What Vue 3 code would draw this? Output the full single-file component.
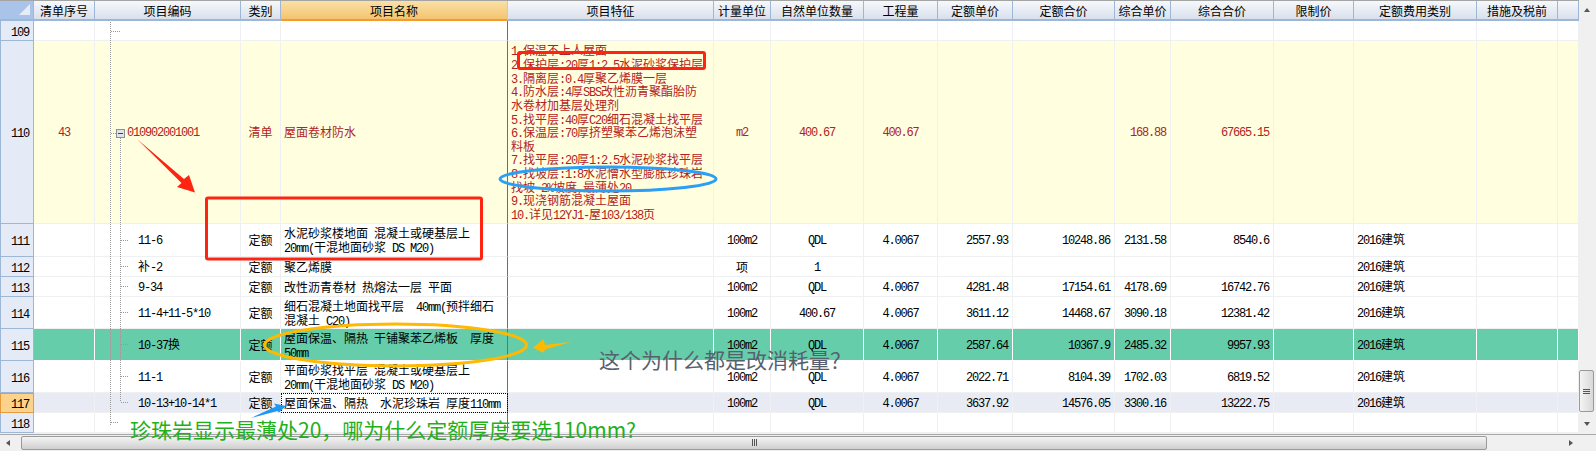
<template>
  <div class="sheet">
    <div class="main">
      <div class="table">
        <div class="row head">
          <div class="corner"></div>
          <div
            v-for="(h, i) in headers"
            :key="h + i"
            class="hcell"
            :class="{ picked: h === '项目名称' }"
          >{{ h }}</div>
        </div>

        <div
          v-for="r in rows"
          :key="r.no"
          class="row"
          :class="r.kind"
          :style="{ height: r.h + 'px' }"
        >
          <div class="no"><Txt :text="String(r.no)" /></div>
          <div class="cell center"><Txt :text="r.seq" /></div>
          <div class="cell code" :class="{ top: r.top }"><Txt :text="r.code" /></div>
          <div class="cell center"><Txt :text="r.type" /></div>
          <div class="cell name">
            <div v-for="l in r.name" :key="l" class="line"><Txt :text="l" /></div>
          </div>
          <div class="cell feat">
            <div v-for="l in r.feat" :key="l" class="line"><Txt :text="l" /></div>
          </div>
          <div class="cell center"><Txt :text="r.unit" /></div>
          <div class="cell center"><Txt :text="r.qty" /></div>
          <div class="cell center"><Txt :text="r.work" /></div>
          <div class="cell right"><Txt :text="r.price" /></div>
          <div class="cell right"><Txt :text="r.sum" /></div>
          <div class="cell right"><Txt :text="r.uprice" /></div>
          <div class="cell right"><Txt :text="r.usum" /></div>
          <div class="cell"></div>
          <div class="cell fee"><Txt :text="r.fee" /></div>
          <div class="cell"></div>
          <div class="cell last"></div>
        </div>
      </div>

      <div class="vbar">
        <span class="arrow up"></span>
        <div class="vthumb"><i></i><i></i><i></i></div>
        <span class="arrow down"></span>
      </div>
    </div>

    <div class="hbar">
      <span class="arrow left"></span>
      <div class="hthumb"><i></i><i></i><i></i></div>
      <span class="arrow right-a"></span>
    </div>

    <!-- tree lines and the hand drawn marks on top of the sheet -->
    <svg class="marks" width="1596" height="451" viewBox="0 0 1596 451">
      <g stroke="#999" stroke-dasharray="1 1" fill="none" shape-rendering="crispEdges">
        <path d="M110.5 22V425" />
        <path d="M120.5 138V402" />
        <path d="M111 31.5H120" />
        <path d="M111 133.5H116" />
        <path d="M121 240.5H129" />
        <path d="M121 266.5H129" />
        <path d="M121 286.5H129" />
        <path d="M121 312.5H129" />
        <path d="M121 344.5H129" />
        <path d="M121 376.5H129" />
        <path d="M121 402.5H129" />
        <path d="M111 422.5H119" />
      </g>
      <rect x="116.5" y="129.5" width="8" height="8" fill="#dfe3ec" stroke="#8a8f9c" />
      <path d="M118 133.5h5" stroke="#2b3f86" shape-rendering="crispEdges" />

      <g fill="none" stroke-width="3">
        <rect x="206.5" y="198" width="275" height="61" rx="1.5" stroke="#ff2412" />
        <rect x="518.5" y="52.5" width="186" height="16" rx="1.5" stroke="#ff2412" />
        <ellipse cx="608" cy="179" rx="108" ry="12" stroke="#2a9ff4" />
        <ellipse cx="395.5" cy="345" rx="131" ry="21" stroke="#ffb900" />
      </g>
      <polygon fill="#ff2412" points="137,139 184,179 189,175 195,192.5 177,187 181.5,183" />
      <polygon fill="#ffb900" points="571.4,341.7 545,345 543.6,339 532.9,347.7 543.6,352.7 545,349.5" />
      <polygon fill="#1e96f2" points="251,418 276,406.5 274,403.5 286,406 279,412.5 277.5,411" />
    </svg>

    <div class="note note-grey">这个为什么都是改消耗量？</div>
    <div class="note note-green">珍珠岩显示最薄处20，哪为什么定额厚度要选110mm?</div>
  </div>
</template>

<script setup>
import { h } from 'vue'

// SimSun has half width latin, so latin runs get their own mono span
function Txt(props) {
  const parts = (props.text || '').match(/[\x20-\x7e]+|[^\x20-\x7e]+/g) || []
  return h(
    'span',
    parts.map((p) => h('span', { class: /^[\x20-\x7e]/.test(p) ? 'lat' : 'cjk' }, p))
  )
}
Txt.props = ['text']

const headers = [
  '清单序号', '项目编码', '类别', '项目名称', '项目特征', '计量单位', '自然单位数量', '工程量',
  '定额单价', '定额合价', '综合单价', '综合合价', '限制价', '定额费用类别', '措施及税前', ''
]

const rows = [
  { no: 109, h: 20 },
  {
    no: 110, h: 183, kind: 'bill', top: true, seq: '43', code: '010902001001', type: '清单',
    name: ['屋面卷材防水'],
    feat: [
      '1.保温不上人屋面',
      '2.保护层:20厚1:2.5水泥砂浆保护层',
      '3.隔离层:0.4厚聚乙烯膜一层',
      '4.防水层:4厚SBS改性沥青聚酯胎防',
      '水卷材加基层处理剂',
      '5.找平层:40厚C20细石混凝土找平层',
      '6.保温层:70厚挤塑聚苯乙烯泡沫塑',
      '料板',
      '7.找平层:20厚1:2.5水泥砂浆找平层',
      '8.找坡层:1:8水泥憎水型膨胀珍珠岩',
      '找坡 2%坡度,最薄处20',
      '9.现浇钢筋混凝土屋面',
      '10.详见12YJ1-屋103/138页'
    ],
    unit: 'm2', qty: '400.67', work: '400.67', uprice: '168.88', usum: '67665.15'
  },
  {
    no: 111, h: 33, code: '11-6', type: '定额',
    name: ['水泥砂浆楼地面 混凝土或硬基层上', '20mm(干混地面砂浆 DS M20)'],
    unit: '100m2', qty: 'QDL', work: '4.0067', price: '2557.93', sum: '10248.86',
    uprice: '2131.58', usum: '8540.6', fee: '2016建筑'
  },
  {
    no: 112, h: 20, code: '补-2', type: '定额', name: ['聚乙烯膜'], unit: '项', qty: '1', fee: '2016建筑'
  },
  {
    no: 113, h: 20, code: '9-34', type: '定额', name: ['改性沥青卷材 热熔法一层 平面'],
    unit: '100m2', qty: 'QDL', work: '4.0067', price: '4281.48', sum: '17154.61',
    uprice: '4178.69', usum: '16742.76', fee: '2016建筑'
  },
  {
    no: 114, h: 32, code: '11-4+11-5*10', type: '定额',
    name: ['细石混凝土地面找平层  40mm(预拌细石', '混凝土 C20)'],
    unit: '100m2', qty: '400.67', work: '4.0067', price: '3611.12', sum: '14468.67',
    uprice: '3090.18', usum: '12381.42', fee: '2016建筑'
  },
  {
    no: 115, h: 32, kind: 'teal', code: '10-37换', type: '定额',
    name: ['屋面保温、隔热 干铺聚苯乙烯板  厚度', '50mm'],
    unit: '100m2', qty: 'QDL', work: '4.0067', price: '2587.64', sum: '10367.9',
    uprice: '2485.32', usum: '9957.93', fee: '2016建筑'
  },
  {
    no: 116, h: 32, code: '11-1', type: '定额',
    name: ['平面砂浆找平层 混凝土或硬基层上', '20mm(干混地面砂浆 DS M20)'],
    unit: '100m2', qty: 'QDL', work: '4.0067', price: '2022.71', sum: '8104.39',
    uprice: '1702.03', usum: '6819.52', fee: '2016建筑'
  },
  {
    no: 117, h: 20, kind: 'current', code: '10-13+10-14*1', type: '定额',
    name: ['屋面保温、隔热  水泥珍珠岩 厚度110mm'],
    unit: '100m2', qty: 'QDL', work: '4.0067', price: '3637.92', sum: '14576.05',
    uprice: '3300.16', usum: '13222.75', fee: '2016建筑'
  },
  { no: 118, h: 20 }
]
</script>

<style scoped>
.sheet {
  position: relative;
  width: 1596px;
  height: 451px;
  overflow: hidden;
  background: #f0f0f0;
  font-family: "Noto Sans CJK SC", sans-serif;
  font-size: 12px;
  color: #000;
}

.main {
  display: flex;
  height: 433px;
}

.table {
  width: 1579px;
  background: #fff;
}

.row {
  display: grid;
  grid-template-columns: 34px 61px 146px 40px 227px 206px 57px 93px 74px 75px 102px 56px 103px 80px 123px 81px 21px;
  grid-template-rows: 100%;
  box-sizing: border-box;
  overflow: hidden;
}

.head {
  height: 21px;
  border-top: 1px solid #a4a4a4;
}

.corner {
  position: relative;
  background: #a9c4e8;
  border-right: 1px solid #9cb8d6;
  border-bottom: 2px solid #9cb8d6;
}

.corner::after {
  content: "";
  position: absolute;
  right: 3px;
  bottom: 4px;
  border-style: solid;
  border-width: 0 0 11px 11px;
  border-color: transparent transparent #e6edf8 transparent;
}

.hcell {
  display: flex;
  align-items: center;
  justify-content: center;
  white-space: nowrap;
  background: linear-gradient(#f6f8fb, #d9e0ec);
  border-right: 1px solid #9cb8d6;
  border-bottom: 2px solid #9cb8d6;
  box-sizing: border-box;
}

.hcell.picked {
  background: linear-gradient(#fae0a6, #f4c470);
  border-right-color: #f4c470;
  border-bottom-color: #f79a2c;
}

.no {
  display: flex;
  align-items: center;
  justify-content: flex-end;
  padding-right: 4px;
  background: #e4ebf7;
  border-right: 1px solid #9cb8d6;
  border-bottom: 1px solid #9cb8d6;
  border-left: 1px solid #9cb8d6;
  box-sizing: border-box;
}

.cell {
  display: flex;
  flex-direction: column;
  justify-content: center;
  border-right: 1px solid #eef0f2;
  border-bottom: 1px solid #eef0f2;
  box-sizing: border-box;
  line-height: 14px;
  white-space: pre;
  min-width: 0;
}

.line {
  height: 14px;
  flex: none;
}

.center {
  align-items: center;
}

.right {
  align-items: flex-end;
  padding-right: 4px;
}

.code {
  padding-left: 43px;
}

.code.top {
  padding-left: 32px;
}

.name {
  padding-left: 3px;
  border-right: 1px solid #6e6e6e;
}

.feat {
  padding-left: 3px;
  line-height: 13.67px;
}

.feat .line {
  height: 13.67px;
}

.fee {
  padding-left: 3px;
}

.bill .cell {
  background: #ffffe0;
  color: #b22222;
}

.bill .name {
  border-right-color: #6e6e6e;
}

.teal .cell {
  background: #66cdaa;
  border-right-color: #fff;
  border-bottom-color: #fff;
}

.teal .name {
  border-right-color: #6e6e6e;
}

.current .cell {
  background: #e8ebf4;
}

.current .no {
  background: #fdd28a;
  border: 1px solid #e79a3c;
}

.current .name {
  background: #fff;
  outline: 1px dotted #000;
  outline-offset: -1px;
}

.cell :deep(.lat),
.no :deep(.lat) {
  font-family: "Liberation Mono", monospace;
  font-size: 12px;
  letter-spacing: -1.2px;
}

.vbar {
  position: relative;
  width: 17px;
  background: #f0f0f0;
  display: flex;
  flex-direction: column;
}

.vthumb {
  margin-top: 370px;
  height: 42px;
  width: 15px;
  box-sizing: border-box;
  display: flex;
  flex-direction: column;
  align-items: center;
  justify-content: center;
  gap: 1px;
  background: linear-gradient(90deg, #f4f4f4, #d8d8d8);
  border: 1px solid #9a9a9a;
  border-radius: 2px;
}

.vthumb i {
  width: 7px;
  height: 1px;
  background: #555;
}

.hbar {
  display: flex;
  align-items: center;
  height: 16px;
  margin-top: 1px;
  border-top: 1px solid #a8a8a8;
  box-sizing: border-box;
  background: #f0f0f0;
}

.hthumb {
  margin-left: 11px;
  width: 1466px;
  height: 14px;
  box-sizing: border-box;
  display: flex;
  align-items: center;
  justify-content: center;
  gap: 1px;
  background: linear-gradient(#f4f4f4, #cfcfcf);
  border: 1px solid #9a9a9a;
  border-radius: 2px;
}

.hthumb i {
  width: 1px;
  height: 7px;
  background: #555;
}

.arrow {
  display: block;
  width: 0;
  height: 0;
  border-style: solid;
}

.arrow.up {
  position: absolute;
  top: 8px;
  left: 5px;
  border-width: 0 3.5px 4px 3.5px;
  border-color: transparent transparent #555 transparent;
}

.arrow.down {
  position: absolute;
  top: 422px;
  left: 5px;
  border-width: 4px 3.5px 0 3.5px;
  border-color: #555 transparent transparent transparent;
}

.arrow.left {
  margin-left: 6px;
  border-width: 3.5px 4px 3.5px 0;
  border-color: transparent #555 transparent transparent;
}

.arrow.right-a {
  margin-left: 82px;
  border-width: 3.5px 0 3.5px 4px;
  border-color: transparent transparent transparent #555;
}

.marks {
  position: absolute;
  top: 0;
  left: 0;
  pointer-events: none;
}

.note {
  position: absolute;
  white-space: nowrap;
  line-height: 28px;
  font-size: 21px;
}

.note-grey {
  left: 599px;
  top: 345px;
  color: #56616e;
}

.note-green {
  left: 130px;
  top: 415px;
  color: #1fb01a;
}
</style>
